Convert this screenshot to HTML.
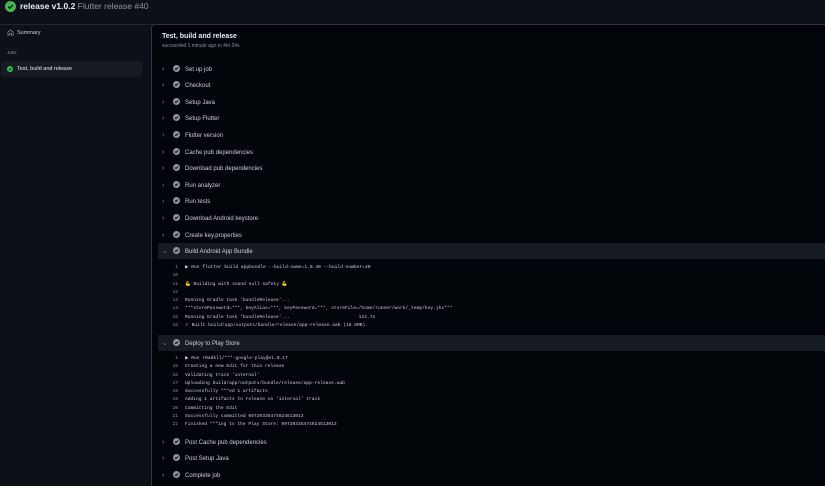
<!DOCTYPE html>
<html style="width:825px;height:486px;overflow:hidden"><head><meta charset="utf-8"><style>
*{margin:0;padding:0;box-sizing:border-box}
body{width:825px;height:486px;overflow:hidden;background:#0d1117;font-family:"Liberation Sans",sans-serif;color:#c9d1d9;position:relative}
.abs{position:absolute;white-space:nowrap}
.main{position:absolute;left:151px;top:24px;width:680px;height:462px;background:#010409;border:1px solid #30363d;border-bottom:none;border-radius:4px 0 0 0}
.row{position:absolute;left:158px;width:667px;height:16px;font-size:6px;line-height:16px;color:#c9d1d9}
.row.open{background:#161b22}
.row .chev{position:absolute;left:4px;top:1px;color:#8b949e;font-size:7px}
.row svg{position:absolute;left:15px;top:3.5px}
.row .t{position:absolute;left:27px;top:0.5px}
.log{position:absolute;font-family:"Liberation Mono",monospace;font-size:4.6px;color:#c9d1d9;line-height:8.3px}
.log .n{position:absolute;left:0;width:20px;text-align:right;color:#8b949e}
.log .l{position:absolute;left:27px;white-space:pre}
</style></head><body>
<svg class="abs" style="left:5px;top:1px" width="11" height="11" viewBox="0 0 16 16"><circle cx="8" cy="8" r="8" fill="#3fb950"/><path d="M4.5 8.2l2.3 2.3 4.7-4.8" stroke="#0d1117" stroke-width="2" fill="none"/></svg>
<div class="abs" style="left:20px;top:1px;font-size:8.5px;line-height:11px;font-weight:bold;color:#e6edf3">release v1.0.2 <span style="font-weight:normal;color:#8b949e">Flutter release #40</span></div>
<div style="position:absolute;left:0;top:24px;width:825px;height:1px;background:#21262d"></div>
<svg class="abs" style="left:7px;top:29px" width="7" height="7" viewBox="0 0 16 16"><path d="M2 7l6-5 6 5v7H10V10H6v4H2z" stroke="#8b949e" stroke-width="1.5" fill="none"/></svg>
<div class="abs" style="left:17px;top:28px;font-size:5.5px;line-height:10px;color:#c9d1d9">Summary</div>
<div class="abs" style="left:7px;top:50px;font-size:4.5px;color:#8b949e">Jobs</div>
<div style="position:absolute;left:1px;top:61px;width:141px;height:16px;background:#161b22;border-radius:3px"></div>
<svg class="abs" style="left:7px;top:66px" width="6" height="6" viewBox="0 0 16 16"><circle cx="8" cy="8" r="8" fill="#3fb950"/><path d="M4.5 8.2l2.3 2.3 4.7-4.8" stroke="#0d1117" stroke-width="2.2" fill="none"/></svg>
<div class="abs" style="left:17px;top:64px;font-size:5.5px;line-height:10px;color:#e6edf3">Test, build and release</div>
<div class="main"></div>
<div class="abs" style="left:162px;top:33px;font-size:7px;font-weight:bold;color:#e6edf3">Test, build and release</div>
<div class="abs" style="left:162px;top:43px;font-size:5px;color:#8b949e">succeeded 1 minute ago in 4m 24s</div>
<svg width="0" height="0" style="position:absolute"><defs><g id="ck"><circle cx="8" cy="8" r="8" fill="#8b949e"/><path d="M4.5 8.2l2.3 2.3 4.7-4.8" stroke="#010409" stroke-width="2.2" fill="none"/></g></defs></svg>

<div class="row" style="top:61px"><span class="chev">›</span><svg width="7" height="7" viewBox="0 0 16 16"><use href="#ck"/></svg><span class="t">Set up job</span></div>
<div class="row" style="top:77px"><span class="chev">›</span><svg width="7" height="7" viewBox="0 0 16 16"><use href="#ck"/></svg><span class="t">Checkout</span></div>
<div class="row" style="top:94px"><span class="chev">›</span><svg width="7" height="7" viewBox="0 0 16 16"><use href="#ck"/></svg><span class="t">Setup Java</span></div>
<div class="row" style="top:110px"><span class="chev">›</span><svg width="7" height="7" viewBox="0 0 16 16"><use href="#ck"/></svg><span class="t">Setup Flutter</span></div>
<div class="row" style="top:127px"><span class="chev">›</span><svg width="7" height="7" viewBox="0 0 16 16"><use href="#ck"/></svg><span class="t">Flutter version</span></div>
<div class="row" style="top:144px"><span class="chev">›</span><svg width="7" height="7" viewBox="0 0 16 16"><use href="#ck"/></svg><span class="t">Cache pub dependencies</span></div>
<div class="row" style="top:160px"><span class="chev">›</span><svg width="7" height="7" viewBox="0 0 16 16"><use href="#ck"/></svg><span class="t">Download pub dependencies</span></div>
<div class="row" style="top:177px"><span class="chev">›</span><svg width="7" height="7" viewBox="0 0 16 16"><use href="#ck"/></svg><span class="t">Run analyzer</span></div>
<div class="row" style="top:193px"><span class="chev">›</span><svg width="7" height="7" viewBox="0 0 16 16"><use href="#ck"/></svg><span class="t">Run tests</span></div>
<div class="row" style="top:210px"><span class="chev">›</span><svg width="7" height="7" viewBox="0 0 16 16"><use href="#ck"/></svg><span class="t">Download Android keystore</span></div>
<div class="row" style="top:227px"><span class="chev">›</span><svg width="7" height="7" viewBox="0 0 16 16"><use href="#ck"/></svg><span class="t">Create key.properties</span></div>
<div class="row open" style="top:243px"><span class="chev" style="transform:rotate(90deg);left:5px">›</span><svg width="7" height="7" viewBox="0 0 16 16"><use href="#ck"/></svg><span class="t">Build Android App Bundle</span></div>

<div class="log" style="left:158px;top:264px">
<div style="position:relative;height:8.3px"><span class="n">1</span><span class="l">▶ Run flutter build appbundle --build-name=1.0.40 --build-number=40</span></div>
<div style="position:relative;height:8.3px"><span class="n">10</span><span class="l"></span></div>
<div style="position:relative;height:8.3px"><span class="n">11</span><span class="l"><span style="color:#e3b341">💪</span> Building with sound null safety <span style="color:#e3b341">💪</span></span></div>
<div style="position:relative;height:8.3px"><span class="n">12</span><span class="l"></span></div>
<div style="position:relative;height:8.3px"><span class="n">13</span><span class="l">Running Gradle task 'bundleRelease'...</span></div>
<div style="position:relative;height:8.3px"><span class="n">14</span><span class="l">***storePassword=***, keyAlias=***, keyPassword=***, storeFile=/home/runner/work/_temp/key.jks***</span></div>
<div style="position:relative;height:8.3px"><span class="n">15</span><span class="l">Running Gradle task 'bundleRelease'...                         124.7s</span></div>
<div style="position:relative;height:8.3px"><span class="n">16</span><span class="l">✓ Built build/app/outputs/bundle/release/app-release.aab (16.5MB).</span></div>
</div>

<div class="row open" style="top:335px"><span class="chev" style="transform:rotate(90deg);left:5px">›</span><svg width="7" height="7" viewBox="0 0 16 16"><use href="#ck"/></svg><span class="t">Deploy to Play Store</span></div>

<div class="log" style="left:158px;top:355px">
<div style="position:relative;height:8.3px"><span class="n">1</span><span class="l">▶ Run r0adkll/***-google-play@v1.0.17</span></div>
<div style="position:relative;height:8.3px"><span class="n">15</span><span class="l">Creating a new Edit for this release</span></div>
<div style="position:relative;height:8.3px"><span class="n">16</span><span class="l">Validating track 'internal'</span></div>
<div style="position:relative;height:8.3px"><span class="n">17</span><span class="l">Uploading build/app/outputs/bundle/release/app-release.aab</span></div>
<div style="position:relative;height:8.3px"><span class="n">18</span><span class="l">Successfully ***ed 1 artifacts</span></div>
<div style="position:relative;height:8.3px"><span class="n">19</span><span class="l">Adding 1 artifacts to release on 'internal' track</span></div>
<div style="position:relative;height:8.3px"><span class="n">20</span><span class="l">Committing the Edit</span></div>
<div style="position:relative;height:8.3px"><span class="n">21</span><span class="l">Successfully committed 09720335474924513013</span></div>
<div style="position:relative;height:8.3px"><span class="n">22</span><span class="l">Finished ***ing to the Play Store: 09720335474924513013</span></div>
</div>

<div class="row" style="top:434px"><span class="chev">›</span><svg width="7" height="7" viewBox="0 0 16 16"><use href="#ck"/></svg><span class="t">Post Cache pub dependencies</span></div>
<div class="row" style="top:450px"><span class="chev">›</span><svg width="7" height="7" viewBox="0 0 16 16"><use href="#ck"/></svg><span class="t">Post Setup Java</span></div>
<div class="row" style="top:467px"><span class="chev">›</span><svg width="7" height="7" viewBox="0 0 16 16"><use href="#ck"/></svg><span class="t">Complete job</span></div>
</body></html>
